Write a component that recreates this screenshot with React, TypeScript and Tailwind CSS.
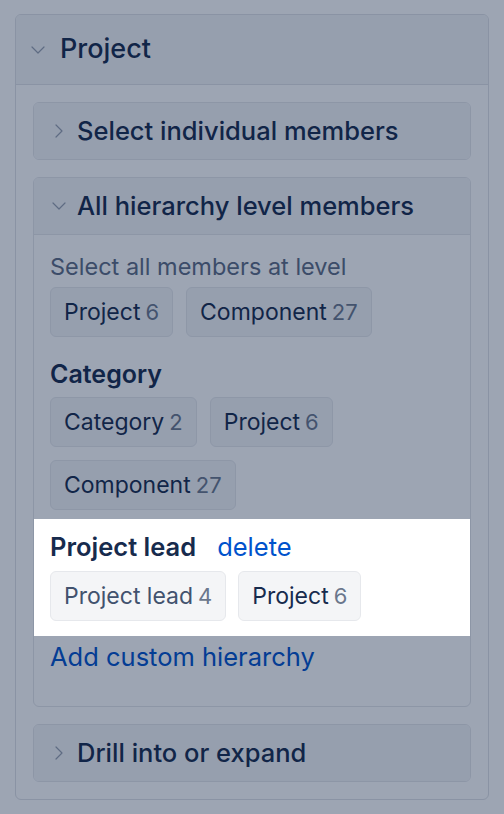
import { ChevronDown, ChevronRight } from 'lucide-react'

type ChipProps = { label: string; count: number; muted?: boolean }

function Chip({ label, count, muted }: ChipProps) {
  return (
    <div className="flex h-[50px] items-center rounded-[6px] border border-[#e6e8ec] bg-[#f4f5f7] px-[13px] text-[23px] leading-none">
      <span className={muted ? 'text-[#42526e]' : 'text-[#172b4d]'}>{label}</span>
      <span className="ml-[5px] text-[22px] text-[#6b778c]">{count}</span>
    </div>
  )
}

function SubHeader({ title, open }: { title: string; open?: boolean }) {
  return (
    <div className="flex h-[56px] items-center gap-[6px] bg-[#f4f5f7] px-[13px]">
      {open ? (
        <ChevronDown className="h-[24px] w-[24px] text-[#97a0af]" strokeWidth={1.2} />
      ) : (
        <ChevronRight className="h-[24px] w-[24px] text-[#97a0af]" strokeWidth={1.2} />
      )}
      <span className="text-[25.5px] font-medium text-[#172b4d]">{title}</span>
    </div>
  )
}

export default function App() {
  return (
    <div
      className="relative h-[814px] w-full bg-white px-[15px] pt-[14px]"
      style={{ fontFamily: 'Inter, "Noto Sans", sans-serif' }}
    >
      <div className="overflow-hidden rounded-[6px] border border-[#dfe1e6]">
        {/* Project header */}
        <div className="flex h-[70px] items-center gap-[10px] border-b border-[#dfe1e6] bg-[#f4f5f7] px-[10px]">
          <ChevronDown className="h-[24px] w-[24px] text-[#97a0af]" strokeWidth={1.2} />
          <span className="text-[27px] font-medium text-[#172b4d]">Project</span>
        </div>

        <div className="flex flex-col gap-[17px] p-[17px]">
          <div className="overflow-hidden rounded-[6px] border border-[#e4e6ea]">
            <SubHeader title="Select individual members" />
          </div>

          <div className="overflow-hidden rounded-[6px] border border-[#e4e6ea]">
            <div className="border-b border-[#e4e6ea]">
              <SubHeader title="All hierarchy level members" open />
            </div>
            <div className="pb-[33px] pt-[16px]">
              <div className="px-[16px]">
                <div className="text-[23.5px] leading-[32px] text-[#5e6c84]">Select all members at level</div>
                <div className="mt-[4px] flex flex-wrap gap-[13px]">
                  <Chip label="Project" count={6} />
                  <Chip label="Component" count={27} />
                </div>
              </div>

              <div className="mt-[21px] px-[16px]">
                <div className="text-[25px] font-semibold leading-[32px] text-[#172b4d]">Category</div>
                <div className="mt-[7px] flex flex-wrap gap-[13px]">
                  <Chip label="Category" count={2} />
                  <Chip label="Project" count={6} />
                  <Chip label="Component" count={27} />
                </div>
              </div>

              <div className="relative z-[2] mt-[9px] bg-white px-[16px] pb-[15px] pt-[12px]">
                <div className="flex items-center text-[25.5px] leading-[32px]">
                  <span className="font-semibold text-[#172b4d]">Project lead</span>
                  <span className="ml-[21px] text-[#0052cc]">delete</span>
                </div>
                <div className="mt-[8px] flex flex-wrap gap-[12px]">
                  <Chip label="Project lead" count={4} muted />
                  <Chip label="Project" count={6} />
                </div>
              </div>

              <div className="mt-[5px] px-[16px] text-[25.5px] leading-[32px] text-[#0052cc]">Add custom hierarchy</div>
            </div>
          </div>

          <div className="overflow-hidden rounded-[6px] border border-[#e4e6ea]">
            <SubHeader title="Drill into or expand" />
          </div>
        </div>
      </div>

      {/* spotlight overlay */}
      <div className="pointer-events-none absolute inset-0 z-[1] bg-[#091e42]/40" />
    </div>
  )
}
